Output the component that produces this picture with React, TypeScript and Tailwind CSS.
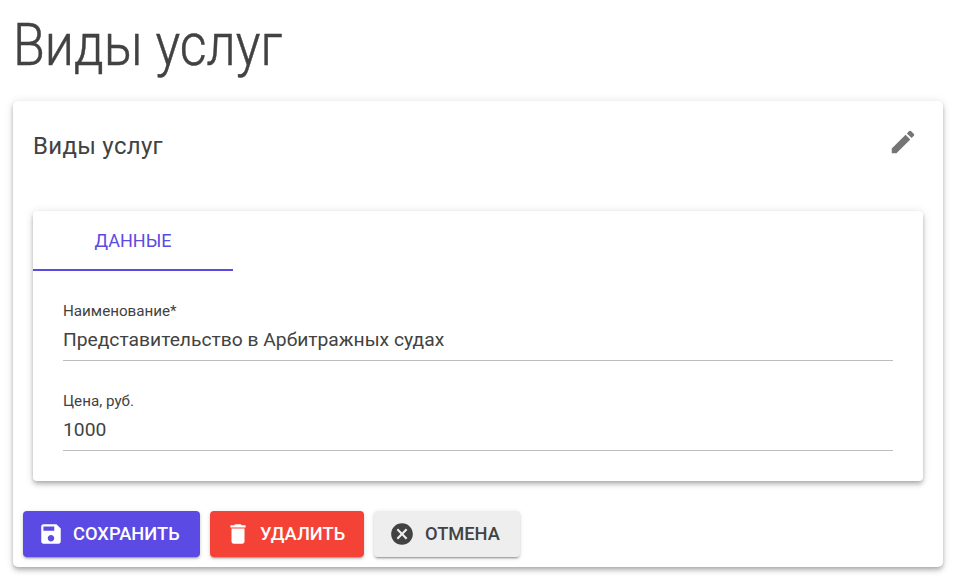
const paths = {
  edit: "M3 17.25V21h3.75L17.81 9.94l-3.75-3.75L3 17.25zM20.71 7.04c.39-.39.39-1.02 0-1.41l-2.34-2.34a.9959.9959 0 0 0-1.41 0l-1.83 1.83 3.75 3.75 1.83-1.83z",
  save: "M17 3H5c-1.11 0-2 .9-2 2v14c0 1.1.89 2 2 2h14c1.1 0 2-.9 2-2V7l-4-4zm-5 16c-1.66 0-3-1.34-3-3s1.34-3 3-3 3 1.34 3 3-1.34 3-3 3zm3-10H5V5h10v4z",
  del: "M6 19c0 1.1.9 2 2 2h8c1.1 0 2-.9 2-2V7H6v12zM19 4h-3.5l-1-1h-5l-1 1H5v2h14V4z",
  cancel: "M12 2C6.47 2 2 6.47 2 12s4.47 10 10 10 10-4.47 10-10S17.53 2 12 2zm5 13.59L15.59 17 12 13.41 8.41 17 7 15.59 10.59 12 7 8.41 8.41 7 12 10.59 15.59 7 17 8.41 13.41 12 17 15.59z",
};

function Icon({ d, className }: { d: string; className?: string }) {
  return (
    <svg viewBox="0 0 24 24" fill="currentColor" className={className}>
      <path d={d} />
    </svg>
  );
}

function Field({ label, value }: { label: string; value: string }) {
  return (
    <div className="flex h-[60px] flex-col border-b border-[#bdbdbd]">
      <span className="text-[15.2px] leading-[20px] text-[#424242]">{label}</span>
      <span className="mt-[5px] text-[19.25px] leading-[28px] text-[#424242]">{value}</span>
    </div>
  );
}

const btnShadow = "shadow-[0_3px_1px_-2px_rgba(0,0,0,0.2),0_2px_2px_0_rgba(0,0,0,0.14),0_1px_5px_0_rgba(0,0,0,0.12)]";

export default function App() {
  return (
    <div className="min-h-[577px] bg-white font-['Roboto',sans-serif] pl-[13px] pr-[10px] text-[#424242]">
      <h1 className="h-[101px] origin-left scale-x-[0.865] pt-[9px] text-[60px] font-light leading-[72px] text-[#424242] [-webkit-text-stroke:0.5px_#424242]">Виды услуг</h1>
      <div className="flex h-[466px] flex-col rounded-[5px] bg-white shadow-[0_2px_4px_-1px_rgba(0,0,0,0.2),0_4px_5px_0_rgba(0,0,0,0.14),0_1px_10px_0_rgba(0,0,0,0.12)]">
        <div className="flex h-[110px] items-start justify-between pl-[20px] pr-[25px] pt-[29px]">
          <span className="text-[24px] leading-[32px] tracking-[0.3px] text-[#424242]">Виды услуг</span>
          <Icon d={paths.edit} className="mt-[-3px] h-[30px] w-[30px] text-[#757575]" />
        </div>
        <div className="mx-[20px] h-[270px] rounded-[4px] bg-white shadow-[0_2px_4px_-1px_rgba(0,0,0,0.2),0_4px_5px_0_rgba(0,0,0,0.14),0_1px_10px_0_rgba(0,0,0,0.12)]">
          <div className="flex h-[60px] w-[200px] items-center justify-center border-b-2 border-[#5c4ae4] text-[18px] text-[#5c4ae4]">ДАННЫЕ</div>
          <div className="flex flex-col gap-[30px] px-[30px] pt-[30px]">
            <Field label="Наименование*" value="Представительство в Арбитражных судах" />
            <Field label="Цена, руб." value="1000" />
          </div>
        </div>
        <div className="mt-[30px] flex gap-[10px] pl-[10px]">
          <button className={`flex h-[46px] w-[177px] items-center rounded-[4px] bg-[#5c4ae4] pl-[15px] text-[18.3px] font-medium text-white ${btnShadow}`}>
            <Icon d={paths.save} className="mr-[9px] h-[26px] w-[26px]" />СОХРАНИТЬ
          </button>
          <button className={`flex h-[46px] w-[154px] items-center rounded-[4px] bg-[#f44336] pl-[15px] text-[18.3px] font-medium text-white ${btnShadow}`}>
            <Icon d={paths.del} className="mr-[9px] h-[26px] w-[26px]" />УДАЛИТЬ
          </button>
          <button className={`flex h-[46px] w-[146px] items-center rounded-[4px] bg-[#eeeeee] pl-[15px] text-[18.3px] font-medium text-[#424242] ${btnShadow}`}>
            <Icon d={paths.cancel} className="mr-[10px] h-[26px] w-[26px]" />ОТМЕНА
          </button>
        </div>
      </div>
    </div>
  );
}
